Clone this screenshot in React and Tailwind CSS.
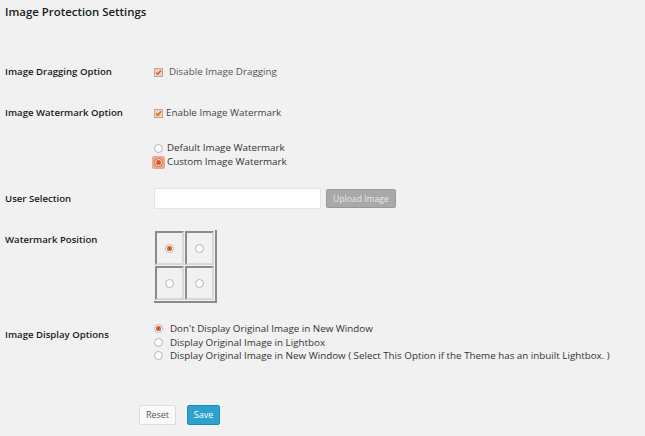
import React from "react";

const font = { fontFamily: '"Open Sans", "Noto Sans", sans-serif' };

function Check() {
  return (
    <span className="inline-flex h-[9px] w-[9px] items-center justify-center border border-[#c9a48e] bg-[#e8d3c4]">
      <svg width="9" height="9" viewBox="0 0 9 9">
        <path d="M1.5 4.5 L3.6 6.6 L7.8 1.8" fill="none" stroke="#d65a1f" strokeWidth="1.8" />
      </svg>
    </span>
  );
}

function Radio({ on, focus }) {
  const dot = (
    <span className="inline-flex h-[9px] w-[9px] items-center justify-center rounded-full border border-[#b4b4b4] bg-white">
      {on && <span className="h-[5px] w-[5px] rounded-full bg-[#d8582a]" />}
    </span>
  );
  if (focus)
    return (
      <span className="inline-flex h-[13px] w-[13px] items-center justify-center rounded-[2px] bg-[#e9a98e]">
        <span className="inline-flex h-[9px] w-[9px] items-center justify-center rounded-full border border-[#d06a45] bg-[#f6e0d6]">
          <span className="h-[5px] w-[5px] rounded-full bg-[#d8582a]" />
        </span>
      </span>
    );
  return dot;
}

function Row({ label, children, className = "" }) {
  return (
    <div className={"flex " + className}>
      <div className="w-[154px] shrink-0 pl-[5px] text-[9.6px] font-semibold text-[#1a1a1a]">{label}</div>
      <div>{children}</div>
    </div>
  );
}

function Cell({ on }) {
  return (
    <div className="flex h-[34px] w-[29px] items-center justify-center border-2 border-t-[#8a8a8a] border-l-[#8a8a8a] border-r-[#d8d8d8] border-b-[#d8d8d8] bg-[#f1f1f1]">
      <Radio on={on} />
    </div>
  );
}

export default function App() {
  return (
    <div style={font} className="h-[436px] w-[645px] overflow-hidden bg-[#f1f1f1] text-[#444]">
      <div className="pl-[5px] pt-[3px] text-[11.4px] font-semibold text-[#1a1a1a]">Image Protection Settings</div>

      <Row label="Image Dragging Option" className="mt-[45px] leading-[14px]">
        <div className="flex items-center gap-[6px] text-[9.8px] text-[#555]">
          <Check />
          <span>Disable Image Dragging</span>
        </div>
      </Row>

      <Row label="Image Watermark Option" className="mt-[27px] leading-[14px]">
        <div className="flex items-center gap-[3px] text-[9.8px] text-[#444]">
          <Check />
          <span>Enable Image Watermark</span>
        </div>
      </Row>

      <div className="mt-[21px] pl-[154px] text-[9.8px] leading-[14px] text-[#333]">
        <div className="flex items-center gap-[4px]">
          <Radio />
          <span>Default Image Watermark</span>
        </div>
        <div className="-ml-[2px] flex items-center gap-[2px]">
          <Radio on focus />
          <span>Custom Image Watermark</span>
        </div>
      </div>

      <Row label="User Selection" className="mt-[19px] items-center leading-[14px]">
        <div className="flex items-center gap-[5px]">
          <div className="h-[21px] w-[167px] border border-[#e4e4e4] bg-white" />
          <div className="flex h-[19px] items-center rounded-[2px] border border-[#999] bg-[#a9a9a9] px-[6px] text-[8.6px] text-[#e8e8e8]">
            Upload Image
          </div>
        </div>
      </Row>

      <Row label="Watermark Position" className="mt-[24px] leading-[14px]">
        <div className="-mt-[3px] w-fit border-b-2 border-r-2 border-b-[#8a8a8a] border-r-[#8a8a8a] bg-[#f1f1f1] p-px">
          <div className="grid grid-cols-[29px_29px] gap-[1px]">
            <Cell on />
            <Cell />
            <Cell />
            <Cell />
          </div>
        </div>
      </Row>

      <Row label="Image Display Options" className="mt-[25px] leading-[13.5px]">
        <div className="-mt-[6px] text-[9.8px] text-[#333]">
          <div className="flex items-center gap-[7px]">
            <Radio on />
            <span>Don't Display Original Image in New Window</span>
          </div>
          <div className="flex items-center gap-[7px]">
            <Radio />
            <span>Display Original Image in Lightbox</span>
          </div>
          <div className="flex items-center gap-[7px]">
            <Radio />
            <span>Display Original Image in New Window ( Select This Option if the Theme has an inbuilt Lightbox. )</span>
          </div>
        </div>
      </Row>

      <div className="mt-[42px] flex gap-[11px] pl-[139px]">
        <div className="flex h-[20px] w-[37px] items-center justify-center rounded-[2px] border border-[#dcdcdc] bg-[#fafafa] text-[9px] text-[#555]">
          Reset
        </div>
        <div className="flex h-[20px] w-[33px] items-center justify-center rounded-[2px] border border-[#1e8cbe] bg-[#2ea2cc] text-[9px] text-white">
          Save
        </div>
      </div>
    </div>
  );
}
